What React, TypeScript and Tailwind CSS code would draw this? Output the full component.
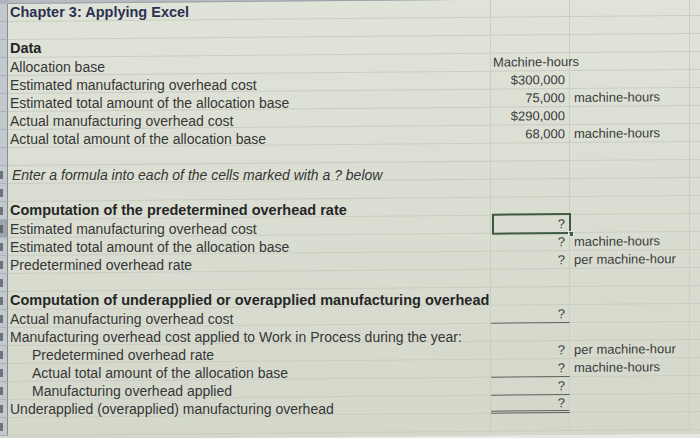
import React from "react";

type RowDef = {
  n: number;
  a?: string;
  kind?: "title" | "bold" | "italic" | "indent";
  b?: string;
  bLeft?: boolean;
  c?: string;
  under?: "single" | "double";
  selected?: boolean;
};

const rows: RowDef[] = [
  { n: 1, a: "Chapter 3: Applying Excel", kind: "title" },
  { n: 2 },
  { n: 3, a: "Data", kind: "bold" },
  { n: 4, a: "Allocation base", b: "Machine-hours", bLeft: true },
  { n: 5, a: "Estimated manufacturing overhead cost", b: "$300,000" },
  { n: 6, a: "Estimated total amount of the allocation base", b: "75,000", c: "machine-hours" },
  { n: 7, a: "Actual manufacturing overhead cost", b: "$290,000" },
  { n: 8, a: "Actual total amount of the allocation base", b: "68,000", c: "machine-hours" },
  { n: 9 },
  { n: 10, a: "Enter a formula into each of the cells marked with a ? below", kind: "italic" },
  { n: 11 },
  { n: 12, a: "Computation of the predetermined overhead rate", kind: "bold" },
  { n: 13, a: "Estimated manufacturing overhead cost", b: "?", selected: true },
  { n: 14, a: "Estimated total amount of the allocation base", b: "?", c: "machine-hours" },
  { n: 15, a: "Predetermined overhead rate", b: "?", c: "per machine-hour" },
  { n: 16 },
  { n: 17, a: "Computation of underapplied or overapplied manufacturing overhead", kind: "bold" },
  { n: 18, a: "Actual manufacturing overhead cost", b: "?", under: "single" },
  { n: 19, a: "Manufacturing overhead cost applied to Work in Process during the year:" },
  { n: 20, a: "Predetermined overhead rate", kind: "indent", b: "?", c: "per machine-hour" },
  { n: 21, a: "Actual total amount of the allocation base", kind: "indent", b: "?", c: "machine-hours", under: "single" },
  { n: 22, a: "Manufacturing overhead applied", kind: "indent", b: "?", under: "single" },
  { n: 23, a: "Underapplied (overapplied) manufacturing overhead", b: "?", under: "double" },
  { n: 24 },
];

function aClass(kind?: RowDef["kind"]) {
  switch (kind) {
    case "title":
      return "font-bold text-[14.5px] text-[#2c3052] ml-[2px]";
    case "bold":
      return "font-bold text-[14.5px] text-[#262626] ml-[2px]";
    case "italic":
      return "italic text-[14px] text-[#353535] ml-[4px]";
    case "indent":
      return "text-[14px] text-[#363636] ml-[24px]";
    default:
      return "text-[14px] text-[#363636] ml-[2px]";
  }
}

function Row({ r }: { r: RowDef }) {
  const sel = r.n === 13;
  return (
    <div className="flex h-[18px]">
      {/* row header strip (only the clipped right edge of the headers is visible) */}
      <div
        className={
          "relative w-[8px] shrink-0 overflow-hidden border-b border-r border-b-[#aab1b7] border-r-[#858d95] " +
          (sel ? "bg-[#9da4aa]" : "bg-[#c2c8cc]")
        }
      >
        {r.n >= 10 && <div className="absolute left-0 top-[5px] w-[3px] h-[8px] bg-[#4a5056] opacity-70" />}
      </div>
      {/* column A */}
      <div className="w-[483px] shrink-0 border-b border-r border-[#c9cec0] flex items-center whitespace-nowrap leading-none">
        {r.a && (
          <span className={"inline-block origin-left skew-y-[0.5deg] " + aClass(r.kind)}>{r.a}</span>
        )}
      </div>
      {/* column B */}
      <div
        className={
          "relative w-[79px] shrink-0 border-r border-[#c9cec0] flex items-center whitespace-nowrap text-[13px] leading-none text-[#3a3a3a] " +
          (r.bLeft ? "justify-start pl-[2px] " : "justify-end pr-[4px] ") +
          (r.under === "single"
            ? "border-b border-b-[#5c5f58]"
            : r.under === "double"
            ? "border-b-[3px] border-double border-b-[#5c5f58]"
            : "border-b")
        }
      >
        {r.b && <span className="relative z-10">{r.b}</span>}
        {r.selected && (
          <div className="absolute left-[1px] top-[-2px] right-[-2px] bottom-[-2px] border-2 border-[#3e5a43]">
            <div className="absolute right-[-5px] bottom-[-5px] w-[6px] h-[6px] bg-[#3e5a43] border border-[#e3e7dc]" />
          </div>
        )}
      </div>
      {/* column C */}
      <div className="w-[120px] shrink-0 border-b border-r border-[#c9cec0] flex items-center whitespace-nowrap text-[13px] leading-none text-[#3a3a3a] pl-[4px]">
        {r.c && <span>{r.c}</span>}
      </div>
      {/* column D */}
      <div className="flex-1 border-b border-[#c9cec0]" />
    </div>
  );
}

export default function App() {
  return (
    <div className="w-[700px] h-[438px] overflow-hidden bg-[#e7e8e4] font-['Liberation_Sans',Arial,sans-serif]">
      <div className="origin-top-left skew-y-[-0.5deg] bg-gradient-to-b from-[#e0e4d8] to-[#d4d8cb] pb-[4px]">
        {/* column header bottom edge */}
        <div className="flex h-[4px]">
          <div className="w-[8px] bg-[#aeb5bb]" />
          <div className="w-[483px] bg-[#b6bcc1] border-b border-[#9aa1a7]" />
          <div className="w-[79px] bg-[#4d5258]" />
          <div className="flex-1 bg-[#b6bcc1] border-b border-[#9aa1a7]" />
        </div>
        {rows.map((r) => (
          <Row key={r.n} r={r} />
        ))}
      </div>
    </div>
  );
}
